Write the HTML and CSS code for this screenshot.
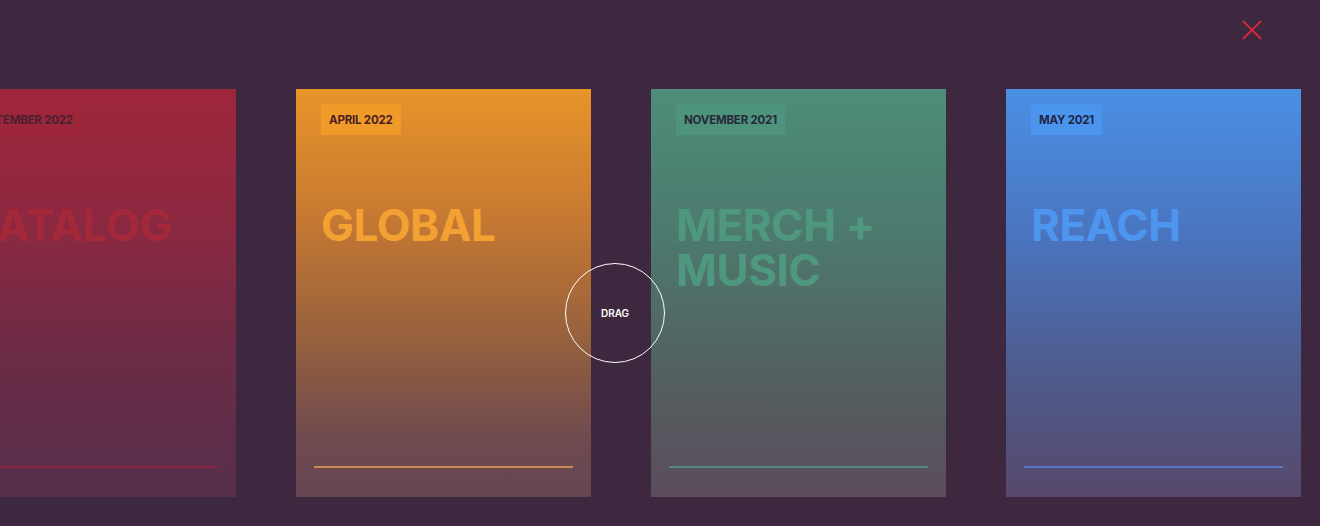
FILE: index.html
```html
<!DOCTYPE html>
<html lang="en">
    <head>
        <meta charset="UTF-8">
        <meta name="viewport" content="width=device-width, initial-scale=1.0">
        <title>Case Studies</title>
        <link rel="stylesheet" href="styles.css">
    </head>
    <body>
        <div class="slider">
            <button class="close-btn" aria-label="Close">
                <svg width="22" height="22" viewBox="0 0 22 22">
                    <path d="M2 2 L20 20 M20 2 L2 20" stroke="#d0283c" stroke-width="2" fill="none"/>
                </svg>
            </button>

            <div class="track">
                <div class="card card-red">
                    <span class="card-date">SEPTEMBER 2022</span>
                    <h2 class="card-title">CATALOG</h2>
                    <div class="card-line"></div>
                </div>
                <div class="card card-orange">
                    <span class="card-date">APRIL 2022</span>
                    <h2 class="card-title">GLOBAL</h2>
                    <div class="card-line"></div>
                </div>
                <div class="card card-green">
                    <span class="card-date">NOVEMBER 2021</span>
                    <h2 class="card-title">MERCH +<br>MUSIC</h2>
                    <div class="card-line"></div>
                </div>
                <div class="card card-blue">
                    <span class="card-date">MAY 2021</span>
                    <h2 class="card-title">REACH</h2>
                    <div class="card-line"></div>
                </div>
            </div>

            <div class="drag-cursor">DRAG</div>
        </div>
    </body>
</html>
```

FILE: styles.css
```css
/* Global styles */
* {
    margin: 0;
    padding: 0;
    box-sizing: border-box;
    font-family: Inter, "Noto Sans", sans-serif;
}

body {
    background-color: #3d2840;
    height: 100vh;
    overflow: hidden;
}

.slider {
    position: relative;
    height: 100%;
}

.close-btn {
    position: absolute;
    top: 19px;
    right: 57px;
    background: none;
    border: none;
    cursor: pointer;
    display: flex;
}

.track {
    display: flex;
    gap: 60px;
    padding-top: 89px;
    margin-left: -59px;
}

.card {
    flex: 0 0 295px;
    height: 408px;
    display: flex;
    flex-direction: column;
    align-items: flex-start;
    padding: 15px 25px 29px;
}

.card-date {
    padding: 9px 8px 8px;
    font-size: 11.5px;
    font-weight: 700;
    line-height: 14px;
    letter-spacing: -0.2px;
}

.card-title {
    margin-top: 68px;
    font-size: 44px;
    font-weight: 700;
    line-height: 45px;
    letter-spacing: -0.5px;
}

.card-line {
    margin: auto -7px 0;
    width: calc(100% + 14px);
    height: 2px;
}

/* Card colours */
.card-red {
    background: linear-gradient(180deg, #9f263b 0%, #8a2841 35%, #6c2b46 65%, #56304b 100%);
}

.card-red .card-date {
    background: #9e263a;
    color: #4a1f32;
}

.card-red .card-title {
    color: #a2283a;
}

.card-red .card-line {
    background: #8a2740;
}

.card-orange {
    background: linear-gradient(180deg, #e8942a 0%, #c87a31 30%, #95603e 62%, #704a4e 85%, #664552 100%);
}

.card-orange .card-date {
    background: #f09a2a;
    color: #4a1f1f;
}

.card-orange .card-title {
    color: #f3a132;
}

.card-orange .card-line {
    background: #c98a55;
}

.card-green {
    background: linear-gradient(180deg, #4e8d79 0%, #4c7a6e 35%, #53605f 70%, #5b4c5c 100%);
}

.card-green .card-date {
    background: #4e937c;
    color: #27293a;
}

.card-green .card-title {
    color: #4f977f;
}

.card-green .card-line {
    background: #4f8a7a;
}

.card-blue {
    background: linear-gradient(180deg, #4a90e5 0%, #4a75c0 35%, #4e5b8c 70%, #57486b 100%);
}

.card-blue .card-date {
    background: #4c95ee;
    color: #1f2546;
}

.card-blue .card-title {
    color: #4d95ee;
}

.card-blue .card-line {
    background: #5378c4;
}

.drag-cursor {
    position: absolute;
    left: 565px;
    top: 263px;
    width: 100px;
    height: 100px;
    border: 1.5px solid #fff;
    border-radius: 50%;
    display: flex;
    align-items: center;
    justify-content: center;
    color: #fff;
    font-size: 10px;
    font-weight: 600;
}
```
